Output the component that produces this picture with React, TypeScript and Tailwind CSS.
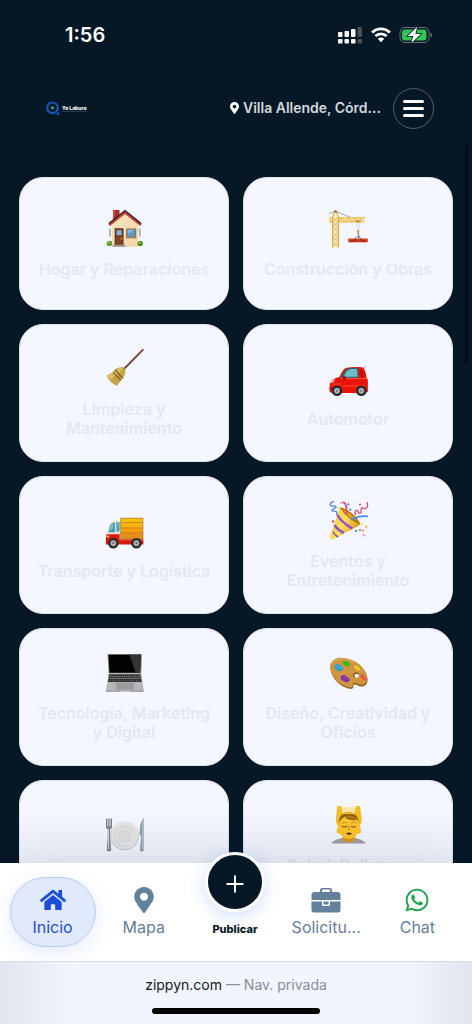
import type { ReactNode } from "react";
import { FaHome, FaMapMarkerAlt, FaWhatsapp } from "react-icons/fa";

const Drawing = (props: { children: ReactNode }) => (
  <svg viewBox="0 0 40 40" className="size-10 shrink-0 overflow-visible" aria-hidden="true">
    {props.children}
  </svg>
);

const House = () => (
  <Drawing>
    <defs>
      <linearGradient id="wall" x1="0" x2="1" y1="0" y2="1">
        <stop offset="0" stopColor="#f8e6c0" />
        <stop offset="1" stopColor="#efd5a2" />
      </linearGradient>
    </defs>
    <path d="M9 2h6.5v8L9 15z" fill="#a92d28" />
    <path d="M9 2h2v12l-2 1z" fill="#d3453c" />
    <path d="M6 20.5v8M35.8 20.5v8" stroke="#9a8878" strokeWidth="1.2" />
    <path d="M21 5 7.8 16.5v22.2H34V16.5z" fill="url(#wall)" />
    <circle cx="5.4" cy="35.4" r="2.7" fill="#5f9a2e" />
    <circle cx="4.8" cy="34.6" r="1.2" fill="#8fc452" />
    <circle cx="36.2" cy="35.4" r="2.7" fill="#4f8726" />
    <circle cx="35.6" cy="34.6" r="1.2" fill="#8fc452" />
    <path d="M5 15.8 21 3.2l16 12.6" fill="none" stroke="#2e2a2e" strokeWidth="2.2" />
    <path d="M5.2 17.2 21 4.8l15.8 12.4" fill="none" stroke="#c9372f" strokeWidth="2" />
    <path d="M10.7 20.3h8.8v16.6h-8.8z" fill="#5f2d1b" />
    <path d="M11.9 21.5h6.4v15h-6.4z" fill="#81412a" />
    <path d="M12.6 22.2h5v5h-5z" fill="#76b4de" />
    <circle cx="17.5" cy="30.8" r=".8" fill="#e6b55a" />
    <path d="M8.7 36.8h12.6v2H8.7z" fill="#a0958c" />
    <path d="M22.2 20.5h10v9.6h-10z" fill="#8d6f56" />
    <path d="M23.6 21.8h7.2v6.6h-7.2z" fill="#579dcb" />
    <path d="M23.6 21.8h7.2l-7.2 4z" fill="#83bfe5" />
    <path d="M21.8 30h10.8" stroke="#b59a7b" />
  </Drawing>
);

const Crane = () => (
  <Drawing>
    <path d="M1 5.5 7.3 3.3 29.5 12" fill="none" stroke="#6e7377" strokeWidth=".6" />
    <path d="M1.3 9.3h35.4v4.2H27l-1.5 1H1.3z" fill="#f8dfa0" />
    <path d="m2 14 4-4 4 4 3.5-4 3.5 4 3.5-4 3.5 4 3.5-4 3.5 4 4-4" fill="none" stroke="#e5b340" strokeWidth=".9" />
    <path d="M1.3 9.7h35.4M1.3 14h35.4" stroke="#e8b545" strokeWidth=".9" />
    <path d="M4.2 9.5 6.5 3h2l2.3 6.5v30H4.2z" fill="#fbebc2" />
    <path d="m4.5 39 6-5-6-5 6-5-6-5 6-5-6-5M10.5 39l-6-5 6-5-6-5 6-5-6-5 6-5" fill="none" stroke="#e5aa3d" strokeWidth=".8" />
    <path d="M4.500 39.5V9L7 3h1l2.500 6v30.500" fill="none" stroke="#e5a936" strokeWidth="1" />
    <path d="M6.2 2.5h2.6v2H6.2z" fill="#80662b" />
    <path d="M27.5 12.4h5v2h-5z" fill="#c6892e" />
    <path d="M29.2 14.4v8M31.2 14.4v8" stroke="#c4cbd3" strokeWidth=".6" />
    <path d="M29.2 22h2v3.5h-2z" fill="#c9a021" />
    <path d="M30.2 25.5v2.2c1.7.3 1.5 2-.2 1.8" fill="none" stroke="#4b5055" strokeWidth=".9" />
    <path d="m30 28.5-7 4.5M30 28.5l7 4.5" stroke="#555" strokeWidth=".6" />
    <path d="M20.3 30.7h19.4v3.6H20.3z" fill="#c93320" />
    <path d="M20.3 31h19.4" stroke="#e55a3b" strokeWidth=".7" />
    <path d="m23 34 5-3m9 3-5-3" stroke="#702017" strokeWidth=".7" />
  </Drawing>
);

const Broom = () => (
  <Drawing>
    <path d="M20.5 20.5 38.8 1.8" stroke="#6b4032" strokeWidth="1.8" strokeLinecap="round" />
    <path d="m23 17 15-15.2" stroke="#a36c50" strokeWidth=".5" />
    <path d="M20.8 19.6c-5-.8-8 .2-10.8 3-2 2.3-4.5 3.8-7.3 5 1.5 4.5 5.7 8.5 10.5 10.2 1-2.5 3.2-4.8 5.5-7.6 2.6-3 3-6 2.1-10.6z" fill="#c7a746" />
    <path d="M20 20c-4.5-.5-7.2.6-9.4 3.2L3.5 28l3 4z" fill="#dfc56a" />
    <path d="M5 28.5c2 3.5 5 6.5 8 8M8 26.5c2 3.5 4.5 6 7.5 7.5" fill="none" stroke="#9c7c2e" strokeWidth=".6" strokeDasharray="1 1" />
    <path d="m11.2 21.8 7.6 8.4M9.3 24.4l7.6 7.8" stroke="#8d6230" strokeWidth="1.5" />
    <path d="m18.5 20.3 2.4 2.3" stroke="#967539" strokeWidth="1" />
  </Drawing>
);

const Wheel = (props: { x: number; y: number }) => (
  <g transform={`translate(${props.x} ${props.y})`}>
    <circle r="5.3" fill="#292929" />
    <circle r="3.1" fill="#8a8a8a" />
    <circle r="2.2" fill="#c2c2c2" />
    <circle r="1.1" fill="#676767" />
  </g>
);

const Car = () => (
  <Drawing>
    <path d="m35.8 10.2 1-2" stroke="#555" strokeWidth=".7" />
    <path d="M1.6 29c0-4 1.2-7 4-8l6-2.2c2.4-5.5 4-8 7-9.1 5-1 10-1 15.3-.4 2.7.5 4 5.2 4.8 10.7L39.9 22v11.7c-2.5 1-6 1.3-9 1.3H6c-3 0-4.6-.5-4.6-2z" fill="#e81508" />
    <path d="M13 20c2.3-5 4-8.3 7-9.5 3-.9 7-.9 10-.6l1 9.8z" fill="#23696f" />
    <path d="M16 18.7c1.2-4 2.7-6.4 5.2-7.2 2.5-.5 5-.5 7.8-.3l.7 7.5z" fill="#70bdc8" />
    <path d="M32.3 11.5c2.3.2 3.3 4.2 3.6 8h-3z" fill="#b90d08" />
    <path d="M12 20.4h27.5" stroke="#ff684e" strokeWidth=".8" />
    <path d="M4 26h9M15 28h21" stroke="#ff5b3b" strokeWidth=".7" />
    <ellipse cx="16.5" cy="20" rx="1.8" ry="1.7" fill="#a70d08" />
    <path d="M2.5 25c.5-2.8 2-4 4.2-4-.5 2.5-2 4.2-4.2 4z" fill="#f5c7c2" />
    <path d="M1.5 30.5H5" stroke="#8b0905" />
    <Wheel x={9} y={32.8} />
    <Wheel x={33.3} y={32.8} />
  </Drawing>
);

const Truck = () => (
  <Drawing>
    <path d="M3.2 24C4 16.5 6 11.5 9 11.2l8-.4V27H3z" fill="#e9e1d4" />
    <path d="M4.5 22.2c.7-5.6 2.5-9.2 5.2-9.5l1.2-.1v9.6z" fill="#3f98ab" />
    <path d="M5.2 21c1-4.3 2-6.8 4-7.5v5z" fill="#78c4d0" />
    <path d="M12.2 12.3h3.5v9.3h-3.5z" fill="#58a9b8" />
    <path d="M16.3 7.8h23v21.8h-23z" fill="#a67d37" />
    <path d="M17 8.5h21.6v3.8H17z" fill="#ffc008" />
    <path d="M17 13h21.6v4.6H17z" fill="#ffb10b" />
    <path d="M17 18.3h21.6v4.2H17z" fill="#fa9f0a" />
    <path d="M17 23.2h21.6v5.2H17z" fill="#e98f16" />
    <path d="M2.6 24h13v5.5h23.8v5H2c-.4-4 0-8 .6-10.5z" fill="#d71911" />
    <path d="M3 24.5h13M16 30h23" stroke="#f15a41" strokeWidth=".8" />
    <path d="M2.3 26.5h3" stroke="#fac554" strokeWidth="1.5" />
    <Wheel x={9.3} y={33.2} />
    <Wheel x={32.4} y={33.2} />
  </Drawing>
);

const Popper = () => (
  <Drawing>
    <defs>
      <linearGradient id="cone" x1="0" x2="1" y1="0" y2=".5">
        <stop offset="0" stopColor="#f2be35" />
        <stop offset=".55" stopColor="#ffe15b" />
        <stop offset="1" stopColor="#d99b19" />
      </linearGradient>
    </defs>
    <path d="M12 7.4C21 9 29 17 32 25L6 39c-2.2 1.1-4.2.3-4-2.4z" fill="url(#cone)" />
    <path d="M12 7.3C20 9 30 17 32.5 24.4 26 23 15 14 12 7.3z" fill="#b77712" />
    <path d="M15 10c5 1.4 10 6 13 10-5-1-10-5-13-10z" fill="#e0a329" />
    <path d="M9.4 15c2.4 5 9 10 15 13.7M6.5 25c1.7 3 5.7 6 9.3 8" fill="none" stroke="#9b51c7" strokeWidth="2.6" />
    <path d="M4.8 31.5c1.4 3 3.5 4.6 5.4 5.5" fill="none" stroke="#7d40ae" strokeWidth="1.4" />
    <path d="M6 1.7C1.5 2 1 6.5 5 6.2c3-.3 4.5 1 1.2 2.4-3 1.3-3.5 2.7.3 2.5 3 0 2.5 2 2 4" fill="none" stroke="#4d83ec" strokeWidth="1.3" />
    <path d="M14.5 3c3-2.5 4.5 4 4 12" fill="none" stroke="#ed4778" strokeWidth="1.8" />
    <path d="M23 20c4-3.500 12-4.500 17-3.500" fill="none" stroke="#4286f4" strokeWidth="1.7" />
    <path d="M27.5 15c-1-3 .3-5.2 2-4.5 1.7.8 0 3 2.5 2.7 2.8-.7-.2-4 1.700-5.300 2.2-.8 2 2 4 .7 2.500-2 2-5 1.200-6.500" fill="none" stroke="#d94273" strokeWidth="1.2" />
    <g fill="#3388f1">
      <circle cx="20.2" cy="4.3" r="1.1" />
      <circle cx="22.3" cy="9.7" r="1.1" />
      <circle cx="28" cy="31" r="1.1" />
    </g>
    <g fill="#ef4976">
      <circle cx="5" cy="21.5" r="1.2" />
      <circle cx="32" cy="4.5" r="1.1" />
      <circle cx="32" cy="30" r="1" />
    </g>
    <g fill="#fa9638">
      <circle cx="38.2" cy="26.7" r="1.1" />
      <circle cx="35" cy="30.7" r="1.1" />
    </g>
    <g fill="#e99bd7">
      <circle cx="36" cy="35.2" r="1.2" />
      <circle cx="12.8" cy="3" r="1" />
    </g>
    <circle cx="10" cy="7.5" r="1" fill="#f3e654" />
    <circle cx="34.5" cy="24.3" r="1" fill="#f4df49" />
  </Drawing>
);

const Laptop = () => (
  <Drawing>
    <path d="M3.5 2h34.4l-.7 19.5H4.7z" fill="#8c8c8c" />
    <path d="M4.5 2.8h32.4l-.8 17.9H5.4z" fill="#030303" />
    <path d="M25.5 2.8h11.4l-.8 17.9h-4.2z" fill="#343434" />
    <path d="M4.7 21h32.5l2.6 18.3H2z" fill="#b4b5b6" />
    <path d="M5 22.2h31.8l1 7.7H4z" fill="#737373" />
    <path d="M5.3 23.2h31M4.9 25.4h32M4.6 27.6h32.8M4.3 29.3h33.4" stroke="#202020" strokeWidth="1.4" strokeDasharray="1.7 .5" />
    <path d="M12.5 30.8h17.3l.5 7H12z" fill="#9a9b9d" />
    <path d="M2 38.7h37.8v1H2z" fill="#8c8d8f" />
    <path d="M16 38.8h10v.9H16z" fill="#d8d8d8" />
  </Drawing>
);

const Palette = () => (
  <Drawing>
    <path d="M3 12C7 4.5 16 5 25 9c9 4 15.5 13 14.5 20-.8 5.7-6.4 6.8-10.2 4.2-2.2-1.5-4.5-.7-4 1.2.5 2.5-2 2.8-5.8 1.8C9 33.5.3 21.4 3 12z" fill="#945f1e" />
    <path d="M2.7 11.5C6.7 4 16 4.5 25 8.5c8.8 4 15 12.5 14.2 19.3-.9 5-5.8 6.3-9.8 3.7-2.5-1.5-5.3-.2-4.7 2 .3 2-2 2.3-5 1.4C9 32.4 0 20.8 2.7 11.5z" fill="#cf963f" />
    <path d="M4 12c4-6.5 14-5 21.2-1.5" fill="none" stroke="#e4b667" strokeWidth=".7" />
    <ellipse cx="28.2" cy="23.3" rx="3" ry="2.7" fill="#764719" />
    <ellipse cx="28.7" cy="23.8" rx="2.4" ry="2.1" fill="#f4f7ff" />
    <path d="M7 13c2-2 5-1 5.3.5 2 .5 3.5 3 2 4.8-2 1.5-5 .9-5.5-.8C6.5 17 5.8 14.5 7 13z" fill="#2d9bd4" />
    <path d="M9 14c2 0 3 1 4 3" fill="none" stroke="#73c6e6" strokeWidth=".8" />
    <path d="M15 10c2-2 4.4-1.7 5.2.2 2 .3 2.4 2.8.8 3.8-2 1-3.7.3-4.5-1-1.4-.1-2.2-1.6-1.5-3z" fill="#38b721" />
    <path d="M26.2 13.8c2-1 3.4 0 4.2 1.2 2 .6 2.4 2.5.8 3.4-2.2.4-3-.7-3.7-2-1.4-.3-2-1.7-1.3-2.6z" fill="#eccb22" />
    <path d="M32.7 22.3c2-.2 3 1.1 3.7 2.4 2 .6 3 3 1.8 4-2.2.2-3.7-1-4-2.4-1.7-.9-2.5-2.6-1.5-4z" fill="#ed5140" />
    <path d="M13 24.3c1.4-1.8 4-1.4 5 .2 2 .3 3.8 1.8 3.8 3.8-1.2 2.2-4.4 2.5-6 .7-2.4 0-4.2-2.9-2.8-4.7z" fill="#8130a5" />
    <path d="M15 25.5c2-.3 3 1 4.6 2" fill="none" stroke="#a95fc5" strokeWidth=".8" />
  </Drawing>
);

const Plate = () => (
  <Drawing>
    <circle cx="20.7" cy="22" r="14.3" fill="#c5c6ca" />
    <circle cx="20.7" cy="21.6" r="13.8" fill="#e5e5e5" />
    <circle cx="20.7" cy="21.8" r="9.7" fill="#c8cacd" />
    <circle cx="20.9" cy="22.2" r="9.1" fill="#ededed" />
    <circle cx="20.9" cy="21.8" r="7.6" fill="#dddedf" />
    <path d="M12.4 26.5c1.5 3.3 4.5 4.9 8.3 5" fill="none" stroke="#bad0e1" strokeWidth=".8" />
    <path d="M2.5 4.5v8.2c0 1.6 1 2 2.5 2.2s2.5-.6 2.5-2.2V4.5M4.2 4.5V12M5.9 4.5V12" fill="none" stroke="#737981" strokeWidth="1" />
    <path d="M2.2 12h5.6c.3 2-.6 2.6-1.6 3.3v8l1 13c0 1.5-4.500 1.500-4.500 0l1-13v-8c-1-.7-1.800-1.300-1.500-3.300z" fill="#7d8993" />
    <path d="M4.5 15v20" stroke="#d8e6ef" strokeWidth=".8" />
    <path d="M39.8 4c-3.5 2.5-4.3 10-4 17.5h1.4L36 36.2c0 1.6 3.7 1.6 3.7 0z" fill="#8c9dab" />
    <path d="M38.7 6v29" stroke="#cddce5" strokeWidth=".8" />
  </Drawing>
);

const Massage = () => (
  <Drawing>
    <path d="M3 39.5c3-4.1 8.5-4.5 13-6h9.5c4.5 1.5 9.5 2 12.5 6z" fill="#a0a0a2" />
    <path d="M15 32h11.8v4.2c-3 2.7-8.5 2.7-11.8 0z" fill="#dc971c" />
    <path d="M11.5 13h19l2.7 15c-1 1.5-2.5 1.8-3.7 1.8-2.2 3.2-5 5.2-8.7 5.2-3.8 0-6.6-2-8.8-5.2-1.2 0-2.5-.3-3.4-1.8z" fill="#fbc52d" />
    <path d="M10.3 20C9.7 11 15 7.8 20.5 7.8S32 11 31.3 20l-2.7-5c-4.4 1.2-9.6-.6-12-2.4-.6 1.5-4 3-6.3 7.4z" fill="#b17912" />
    <path d="M13 14c3-4.2 12-4.5 15.5 0M17 12.8c4 3 7.5 2.8 11 3" fill="none" stroke="#624010" strokeWidth=".9" />
    <path d="M9.3 2h4.2l1 7.3c4-1.3 8-1.3 12 0l1.200-7.300H32l1.800 12.200c0 4-1 6.500-2.800 7.800l-.7-8-3-3.800-13.300-.1-3.500 4L10 22c-2-2-2.400-5-2-8z" fill="#f9bd24" />
    <path d="M14 4.2c3.6-1.8 10-1.8 13.2 0l-.8 4.4c-4-1.5-8-1.4-11.8.2z" fill="#fbe6a8" />
    <path d="M14 22.2c1.5 1.2 3.4 1.2 5 0m4 0c1.5 1.2 3.4 1.2 5 0" fill="none" stroke="#684011" strokeWidth="1" />
    <path d="M14 19.3c1.5-1 3.3-1 4.8-.4m4.3 0c1.6-.7 3.4-.5 5 .4" fill="none" stroke="#b4720b" strokeWidth=".7" />
    <path d="M20.5 22v3.2h1.2" fill="none" stroke="#c47c11" strokeWidth=".8" />
    <path d="M18 29.6c1.5-1.5 4.3-1.5 6 0-1.5 1.9-4.4 1.9-6 0z" fill="#63311b" />
  </Drawing>
);

const categories = [
  { label: "Hogar y Reparaciones", icon: <House /> },
  { label: "Construcción y Obras", icon: <Crane /> },
  { label: "Limpieza y Mantenimiento", icon: <Broom /> },
  { label: "Automotor", icon: <Car /> },
  { label: "Transporte y Logística", icon: <Truck /> },
  { label: "Eventos y Entretenimiento", icon: <Popper /> },
  { label: "Tecnología, Marketing y Digital", icon: <Laptop /> },
  { label: "Diseño, Creatividad y Oficios", icon: <Palette /> },
  { label: "", icon: <Plate /> },
  { label: "Salud, Belleza y Bienestar", icon: <Massage /> },
];

const StatusBar = () => (
  <div className="flex h-[70px] items-center justify-between pl-[65px] pr-[39px] text-white">
    <span className="text-xl font-semibold">1:56</span>
    <div className="flex items-center gap-2">
      <svg width="25" height="18" viewBox="0 0 25 18" fill="currentColor" aria-hidden="true">
        <rect x="0" y="6" width="4.500" height="5" rx="1" />
        <rect x="6.500" y="5" width="4.500" height="6" rx="1" />
        <rect x="13" y="3" width="4.500" height="8" rx="1" />
        <g opacity=".25">
          <rect x="19.500" y="1" width="4.500" height="10" rx="1" />
          <rect x="19.500" y="13" width="4.500" height="4.500" rx="1" />
        </g>
        <rect x="0" y="13" width="4.500" height="4.500" rx="1" />
        <rect x="6.500" y="13" width="4.500" height="4.500" rx="1" />
        <rect x="13" y="13" width="4.500" height="4.500" rx="1" />
      </svg>
      <svg width="20" height="16" viewBox="0 0 20 16" aria-hidden="true">
        <g fill="none" stroke="currentColor" strokeWidth="2.8">
          <path d="M1.1 5.6C6.2.6 13.8.6 18.9 5.6" />
          <path d="M4.4 9.1c3.2-3 8-3 11.2 0" />
        </g>
        <path d="M6.8 11.8c1.8-1.6 4.6-1.6 6.4 0L10 15.3z" fill="currentColor" />
      </svg>
      <svg width="34" height="18" viewBox="0 0 34 18" aria-hidden="true">
        <rect x="1" y="1.5" width="29" height="15" rx="5" fill="none" stroke="#fff" strokeOpacity=".4" />
        <path d="M31.5 6.5v5c2-.8 2-4.2 0-5z" fill="#fff" fillOpacity=".4" />
        <rect x="3" y="3.5" width="24.5" height="11" rx="3.2" fill="#31c653" />
        <path d="M18.2.8 8.8 10h5.4l-2 7.2L21.8 8h-5.4z" fill="#fff" stroke="#061726" strokeWidth="1.6" paintOrder="stroke" />
      </svg>
    </div>
  </div>
);

const Logo = () => (
  <a href="#inicio" aria-label="Yo Laburo" className="flex items-center gap-0.5 text-white">
    <svg width="14" height="15" viewBox="0 0 14 15" aria-hidden="true">
      <circle cx="6.5" cy="6.8" r="5.3" fill="none" stroke="#1555b7" strokeWidth="2.2" />
      <circle cx="6.5" cy="6.8" r="1.5" fill="#20bd7b" />
      <circle cx="12.2" cy="12.8" r="1.5" fill="#1555b7" />
    </svg>
    <span className="border-b border-white/15 text-[5px] leading-[6px] font-extrabold">Yo Laburo</span>
  </a>
);

const Header = () => (
  <header className="flex h-[76px] items-center pl-[46px] pr-[38px]">
    <Logo />
    <button className="ml-auto flex items-center gap-1 text-sm font-semibold text-[#d3d7dc]">
      <FaMapMarkerAlt className="h-3 w-[9px] text-white" />
      Villa Allende, Córd...
    </button>
    <button
      aria-label="Menú"
      className="ml-3 flex size-[41px] flex-col items-center justify-center gap-1 rounded-full border border-white/30"
    >
      <span className="h-[3px] w-[21px] rounded-sm bg-white" />
      <span className="h-[3px] w-[21px] rounded-sm bg-white" />
      <span className="h-[3px] w-[21px] rounded-sm bg-white" />
    </button>
  </header>
);

const BriefcaseIcon = () => (
  <svg viewBox="0 0 30 26" className="h-[26px] w-[30px]" fill="currentColor" aria-hidden="true">
    <path fillRule="evenodd" d="M9 5V3Q9 1 11 1H19Q21 1 21 3V5H26.5Q29.5 5 29.5 8V13H.5V8Q.5 5 3.5 5ZM11 5H19V2.6H11Z" />
    <path d="M.5 14.5H11V18Q11 19 12 19H18Q19 19 19 18V14.5H29.5V23Q29.5 25.500 27 25.500H3Q.5 25.500 .5 23Z" />
    <path d="M12.5 14.5h5v3h-5z" />
  </svg>
);

const NavItem = (props: { label: string; icon: ReactNode; active?: boolean }) => (
  <a
    href={`#${props.label}`}
    aria-current={props.active ? "page" : undefined}
    className={
      props.active
        ? "mx-auto flex h-[70px] w-[86px] flex-col items-center justify-center gap-0.5 rounded-full border border-[#b9cbf8] bg-[#e0eafc] pt-0.5 text-[#1d4ed8] shadow-[0_6px_20px_rgba(37,99,235,0.12)]"
        : "mx-auto flex h-[70px] w-[86px] flex-col items-center justify-center gap-0.5 pt-0.5 text-[#64809c]"
    }
  >
    {props.icon}
    <span className="text-base leading-6">{props.label}</span>
  </a>
);

const BottomNav = () => (
  <nav className="relative grid h-[98px] grid-cols-5 items-center bg-white pr-[9px] pl-[7px] shadow-[0_-10px_50px_rgba(15,23,42,0.14)]">
    <NavItem active label="Inicio" icon={<FaHome className="size-[26px]" />} />
    <NavItem label="Mapa" icon={<FaMapMarkerAlt className="size-[26px]" />} />
    <button className="-mt-[11px] flex flex-col items-center gap-[7px] self-start text-[#071827]">
      <span className="flex size-[60px] items-center justify-center rounded-full border-[3px] border-white bg-[#061726] pt-1 shadow-[0_4px_18px_rgba(37,99,235,0.2)]">
        <svg width="18" height="18" viewBox="0 0 18 18" aria-hidden="true">
          <path d="M9 .5v17M.5 9h17" stroke="#fff" strokeWidth="2" />
        </svg>
      </span>
      <span className="text-[11px] leading-5 font-extrabold">Publicar</span>
    </button>
    <NavItem label="Solicitu..." icon={<BriefcaseIcon />} />
    <NavItem label="Chat" icon={<FaWhatsapp className="size-[26px] text-[#16a34a]" />} />
  </nav>
);

const BrowserBar = () => (
  <footer className="relative flex h-[63px] flex-col items-center justify-between border-t border-[#d9dce3] bg-linear-to-r from-[#dfe4ee] via-[#f1f5fd] via-15% to-[#f1f5fd] pt-[11px] pb-2.5">
    <div className="absolute inset-y-0 right-0 w-16 bg-linear-to-l from-[#dfe4ee] to-transparent" />
    <p className="text-sm leading-6 text-[#8b8e95]">
      <span className="text-[#17191c]">zippyn.com</span> — Nav. privada
    </p>
    <div className="h-1.5 w-[168px] rounded-full bg-black" />
  </footer>
);

export default function App() {
  return (
    <div className="relative flex h-screen flex-col overflow-hidden bg-[#061726] font-['Inter','Liberation_Sans',sans-serif]">
      <StatusBar />
      <Header />
      <main className="min-h-0 flex-1 overflow-hidden px-[19px] pt-[31px]">
        <div className="grid grid-cols-2 gap-3.5">
          {categories.map((category, index) => (
            <button
              key={index}
              className="flex min-h-[133px] flex-col items-center justify-center gap-3 rounded-3xl border border-[#dfe4ee] bg-[#f4f7ff] px-3 py-[23px] text-base leading-[19px] font-semibold text-[#e2e8f0]"
            >
              {category.icon}
              <span className="min-h-[19px]">{category.label}</span>
            </button>
          ))}
        </div>
      </main>
      <BottomNav />
      <BrowserBar />
      <div className="absolute top-[145px] right-1 h-[219px] w-[3px] rounded-full bg-[#020c16]" />
    </div>
  );
}
